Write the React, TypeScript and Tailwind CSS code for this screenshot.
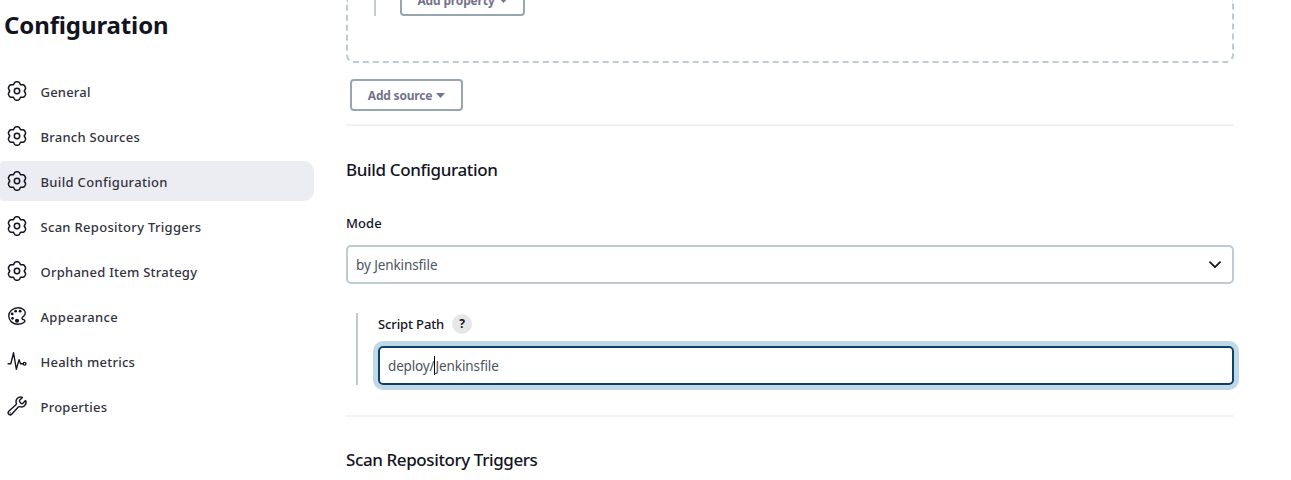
import type { ReactNode } from "react";
import { IoColorPaletteOutline, IoPulseOutline, IoBuildOutline } from "react-icons/io5";

type Item = { label: string; icon: ReactNode; text: string; active?: boolean };

const gearPath =
  Array.from({ length: 120 }, (_, i) => {
    const a = (i * Math.PI) / 60;
    const lobe = (a - Math.PI / 2) * 6;
    const r = 8.5 + 0.95 * Math.cos(lobe) - 0.25 * Math.cos(2 * lobe);
    return `${i ? "L" : "M"}${(11 + r * Math.cos(a)).toFixed(2)} ${(11 + r * Math.sin(a)).toFixed(2)}`;
  }).join("") + "Z";

const gear = (
  <svg width="22" height="22" viewBox="0 0 22 22" fill="none" stroke="#14141f" strokeWidth="1.5" strokeLinejoin="round">
    <path d={gearPath} />
    <circle cx="11" cy="11" r="2.7" />
  </svg>
);

const items: Item[] = [
  { label: "General", icon: gear, text: "tracking-[0.2px]" },
  { label: "Branch Sources", icon: gear, text: "tracking-[0.26px]" },
  { label: "Build Configuration", icon: gear, text: "tracking-[0.33px]", active: true },
  { label: "Scan Repository Triggers", icon: gear, text: "tracking-[0.3px]" },
  { label: "Orphaned Item Strategy", icon: gear, text: "tracking-[0.25px]" },
  { label: "Appearance", icon: <IoColorPaletteOutline size={22} />, text: "tracking-[0.34px]" },
  { label: "Health metrics", icon: <IoPulseOutline size={22} />, text: "tracking-[0.25px]" },
  { label: "Properties", icon: <IoBuildOutline size={22} />, text: "tracking-[0.24px]" },
];

function Caret() {
  return (
    <svg width="9" height="5" viewBox="0 0 9 5" className="mb-0.5 ml-1">
      <path d="M0 0H9L4.5 5Z" fill="currentColor" />
    </svg>
  );
}

export default function App() {
  return (
    <div className="flex h-[480px] w-[1291px] overflow-hidden bg-white font-['Noto_Sans',sans-serif] text-[#14141f]">
      <aside className="w-[314px] shrink-0">
        <h1 className="ml-1 mt-[7px] h-9 whitespace-nowrap text-[24px] font-bold leading-9">
          <span className="tracking-[-0.12px]">Configuration</span>
        </h1>
        <nav className="mt-7 flex flex-col gap-[5px]">
          {items.map((item) => (
            <a
              key={item.label}
              className={
                item.active
                  ? "flex h-10 items-center rounded-r-[10px] rounded-l-[4px] bg-[#ecedf3] pl-[6px]"
                  : "flex h-10 items-center pl-[6px]"
              }
            >
              <span className="w-[34.5px] shrink-0">{item.icon}</span>
              <span className="whitespace-nowrap pt-[3px] text-[13px] font-medium text-[#33333e]">
                <span className={item.text}>{item.label}</span>
              </span>
            </a>
          ))}
        </nav>
      </aside>

      <main className="ml-8 w-[888px] shrink-0">
        <div className="flex h-[63px] items-start rounded-b-[8px] border-2 border-t-0 border-dashed border-[#bfcbcf] pl-[26px]">
          <div className="h-4 w-[2px] bg-[#bfcbcf]" />
          <button className="-mt-4 ml-6 flex h-8 w-[125px] items-center justify-center rounded-[4px] border-2 border-[#98a6af] pt-0.5 text-[12px] font-bold text-[#73738c]">
            <span className="tracking-[-0.15px]">Add property</span>
            <Caret />
          </button>
        </div>
        <button className="ml-1 mt-4 flex h-8 w-[113px] items-center justify-center rounded-[4px] border-2 border-[#98a6af] pt-0.5 text-[12px] font-bold text-[#73738c]">
          <span className="tracking-[-0.2px]">Add source</span>
          <Caret />
        </button>
        <div className="mt-[13px] h-[2px] bg-[#f1f2f7]" />
        <h2 className="mt-[30px] h-7 whitespace-nowrap text-[17px] font-medium leading-7">
          <span className="tracking-[-0.36px]">Build Configuration</span>
        </h2>
        <div className="mt-[29px] h-5 whitespace-nowrap text-[13px] font-medium leading-5">
          <span className="tracking-[0.1px]">Mode</span>
        </div>
        <div className="mt-3 flex h-[39px] items-center justify-between rounded-[5px] border-2 border-[#bfcbcf] pl-2 pr-[11px] text-[13.5px] text-[#4d545d]">
          <span className="pt-px tracking-[-0.1px]">by Jenkinsfile</span>
          <svg width="12" height="8" viewBox="0 0 12 8" fill="none" stroke="#14141f" strokeWidth="1.8" strokeLinecap="round" strokeLinejoin="round">
            <path d="M1 1.2L6 6.2L11 1.2" />
          </svg>
        </div>
        <div className="ml-[10px] mt-[29px] h-[72px] border-l-2 border-[#bfcbcf] pl-5">
          <div className="flex h-[22px] items-center text-[13px] font-medium">
            <span className="whitespace-nowrap pt-px tracking-[-0.12px]">Script Path</span>
            <span className="ml-2 flex size-5 items-center justify-center rounded-full bg-[#e7e7e7] text-[12px] font-bold">?</span>
          </div>
          <div className="mt-[11px] flex h-[39px] items-center rounded-[5px] border-2 border-[#0b4366] pl-2 text-[13.5px] text-[#4d545d] shadow-[0_0_0_5px_#c1d9e7]">
            <span className="pt-px tracking-[-0.15px]">deploy/</span>
            <span className="h-[19px] w-px bg-black" />
            <span className="pt-px tracking-[-0.1px]">Jenkinsfile</span>
          </div>
        </div>
        <div className="mt-[30px] h-[2px] bg-[#f1f2f7]" />
        <h2 className="mt-[29px] h-7 whitespace-nowrap text-[17px] font-medium leading-7">
          <span className="tracking-[-0.4px]">Scan Repository Triggers</span>
        </h2>
      </main>
    </div>
  );
}
